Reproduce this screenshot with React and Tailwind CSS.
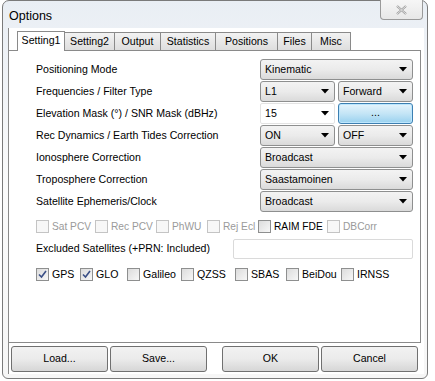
import React from 'react';

const font = { fontFamily: '"Liberation Sans", Tahoma, sans-serif' };

const Arrow = () => (
  <svg width="8" height="5" viewBox="0 0 8 5" className="shrink-0">
    <path d="M0 0 L8 0 L4 4.5 Z" fill="#000" />
  </svg>
);

const Select = ({ value, className = '' }) => (
  <div
    className={`h-[21px] flex items-center justify-between pl-[4px] pr-[5px] rounded-[3px] border border-[#8e8f8f] bg-gradient-to-b from-[#f3f3f3] via-[#ebebeb] to-[#dadada] text-black ${className}`}
  >
    <span>{value}</span>
    <Arrow />
  </div>
);

const Check = ({ label, checked, disabled }) => (
  <div className="flex items-center gap-[3px] whitespace-nowrap">
    <div
      className={`w-[13px] h-[13px] shrink-0 border flex items-center justify-center ${
        disabled ? 'border-[#c4c4c4] bg-[#f7f7f7]' : 'border-[#8e8f8f] bg-gradient-to-br from-[#dcdcdc] to-[#f7f7f7]'
      }`}
    >
      {checked && (
        <svg width="9" height="9" viewBox="0 0 9 9">
          <path d="M1 4.5 L3.5 7 L8 1" stroke="#3a4f86" strokeWidth="1.6" fill="none" />
        </svg>
      )}
    </div>
    <span className={disabled ? 'text-[#9a9a9a]' : 'text-black'}>{label}</span>
  </div>
);

const Row = ({ label, children }) => (
  <div className="flex items-center h-[21px]">
    <span className="w-[224px] shrink-0 whitespace-nowrap">{label}</span>
    <div className="flex gap-[3px] w-[153px]">{children}</div>
  </div>
);

const tabs = [
  ['Setting2', 'w-[50px]'],
  ['Output', 'w-[46px]'],
  ['Statistics', 'w-[55px]'],
  ['Positions', 'w-[62px]'],
  ['Files', 'w-[34px]'],
  ['Misc', 'w-[39px]'],
];

const Btn = ({ label }) => (
  <div className="w-[97px] h-[26px] flex items-center justify-center rounded-[3px] border border-[#707070] bg-gradient-to-b from-[#f2f2f2] via-[#ebebeb] to-[#d6d6d6]">
    {label}
  </div>
);

export default function App() {
  return (
    <div className="w-[435px] h-[381px] bg-white pl-[2px] text-[10.6px] text-black" style={font}>
      <div className="w-[426px] h-[379px] border border-[#7a7a7a] rounded-t-[7px] rounded-b-[6px] bg-gradient-to-b from-[#e9eef4] via-[#fbfbfb] to-[#f6f6f6] flex flex-col pl-[5px] pr-[3px] pb-[4px]">
        <div className="h-[27px] shrink-0 flex justify-between">
          <span className="text-[12.5px] pt-[6px] pl-[1px]">Options</span>
          <div className="w-[43px] h-[20px] -mt-[1px] mr-[1px] border border-[#9a9a9a] border-t-0 rounded-b-[4px] bg-gradient-to-b from-[#f6f6f6] to-[#e8e8e8] flex items-center justify-center">
            <svg width="11" height="10" viewBox="0 0 11 10">
              <path d="M1 1 L10 9 M10 1 L1 9" stroke="#9b9b9b" strokeWidth="2.2" />
              <path d="M1 1 L10 9 M10 1 L1 9" stroke="#fff" strokeWidth="0.7" />
            </svg>
          </div>
        </div>
        <div className="flex-1 flex flex-col border-l border-[#8a8a8a] bg-white">
          <div className="flex items-end h-[22px] pl-[8px] pt-[2px]">
            <div className="w-[48px] h-[20px] border border-b-0 border-[#8a8a8a] bg-white flex items-center justify-center relative top-[1px] z-10 pb-[2px]">
              Setting1
            </div>
            {tabs.map(([t, w]) => (
              <div
                key={t}
                className={`${w} h-[18px] border border-b-0 border-l-0 border-[#8a8a8a] bg-gradient-to-b from-[#f2f2f2] to-[#dedede] flex items-center justify-center`}
              >
                {t}
              </div>
            ))}
          </div>
          <div className="h-[293px] mr-[3px] border border-l-0 border-[#8a8a8a] bg-white pl-[27px] pt-[8px] flex flex-col">
            <div className="flex flex-col gap-[1px]">
              <Row label="Positioning Mode">
                <Select value="Kinematic" className="w-full" />
              </Row>
              <Row label="Frequencies / Filter Type">
                <Select value="L1" className="w-[75px]" />
                <Select value="Forward" className="w-[75px]" />
              </Row>
              <Row label="Elevation Mask (°) / SNR Mask (dBHz)">
                <div className="w-[75px] h-[21px] flex items-center justify-between pl-[4px] pr-[5px] rounded-[2px] border border-[#e3e3e3] bg-white">
                  <span>15</span>
                  <Arrow />
                </div>
                <div className="w-[75px] h-[21px] rounded-[3px] border border-[#3c7fb1] bg-gradient-to-b from-[#e5f4fc] via-[#c4e5f6] to-[#98d1ef] shadow-[inset_0_0_0_1px_#bde6fd] flex items-center justify-center pb-[2px]">
                  ...
                </div>
              </Row>
              <Row label="Rec Dynamics / Earth Tides Correction">
                <Select value="ON" className="w-[75px]" />
                <Select value="OFF" className="w-[75px]" />
              </Row>
              <Row label="Ionosphere Correction">
                <Select value="Broadcast" className="w-full" />
              </Row>
              <Row label="Troposphere Correction">
                <Select value="Saastamoinen" className="w-full" />
              </Row>
              <Row label="Satellite Ephemeris/Clock">
                <Select value="Broadcast" className="w-full" />
              </Row>
            </div>
            <div className="flex items-center h-[13px] mt-[8px] gap-[5px] text-[10.2px]">
              <div className="w-[54px]"><Check label="Sat PCV" disabled /></div>
              <div className="w-[56px]"><Check label="Rec PCV" disabled /></div>
              <div className="w-[46px]"><Check label="PhWU" disabled /></div>
              <div className="w-[46px]"><Check label="Rej Ecl" disabled /></div>
              <div className="w-[64px]"><Check label="RAIM FDE" /></div>
              <Check label="DBCorr" disabled />
            </div>
            <div className="flex items-center h-[20px] mt-[6px]">
              <span className="w-[197px] shrink-0 whitespace-nowrap">Excluded Satellites (+PRN: Included)</span>
              <div className="w-[180px] h-[20px] border border-[#dadada] rounded-[2px] bg-white" />
            </div>
            <div className="flex items-center h-[13px] mt-[9px] gap-[5px]">
              <div className="w-[39px]"><Check label="GPS" checked /></div>
              <div className="w-[42px]"><Check label="GLO" checked /></div>
              <div className="w-[49px]"><Check label="Galileo" /></div>
              <div className="w-[49px]"><Check label="QZSS" /></div>
              <div className="w-[46px]"><Check label="SBAS" /></div>
              <div className="w-[50px]"><Check label="BeiDou" /></div>
              <Check label="IRNSS" />
            </div>
          </div>
          <div className="flex pl-[2px] pt-[3px] mr-[3px]">
            <Btn label="Load..." />
            <div className="w-[2px]" />
            <Btn label="Save..." />
            <div className="w-[15px]" />
            <Btn label="OK" />
            <div className="w-[2px]" />
            <Btn label="Cancel" />
          </div>
        </div>
      </div>
    </div>
  );
}
